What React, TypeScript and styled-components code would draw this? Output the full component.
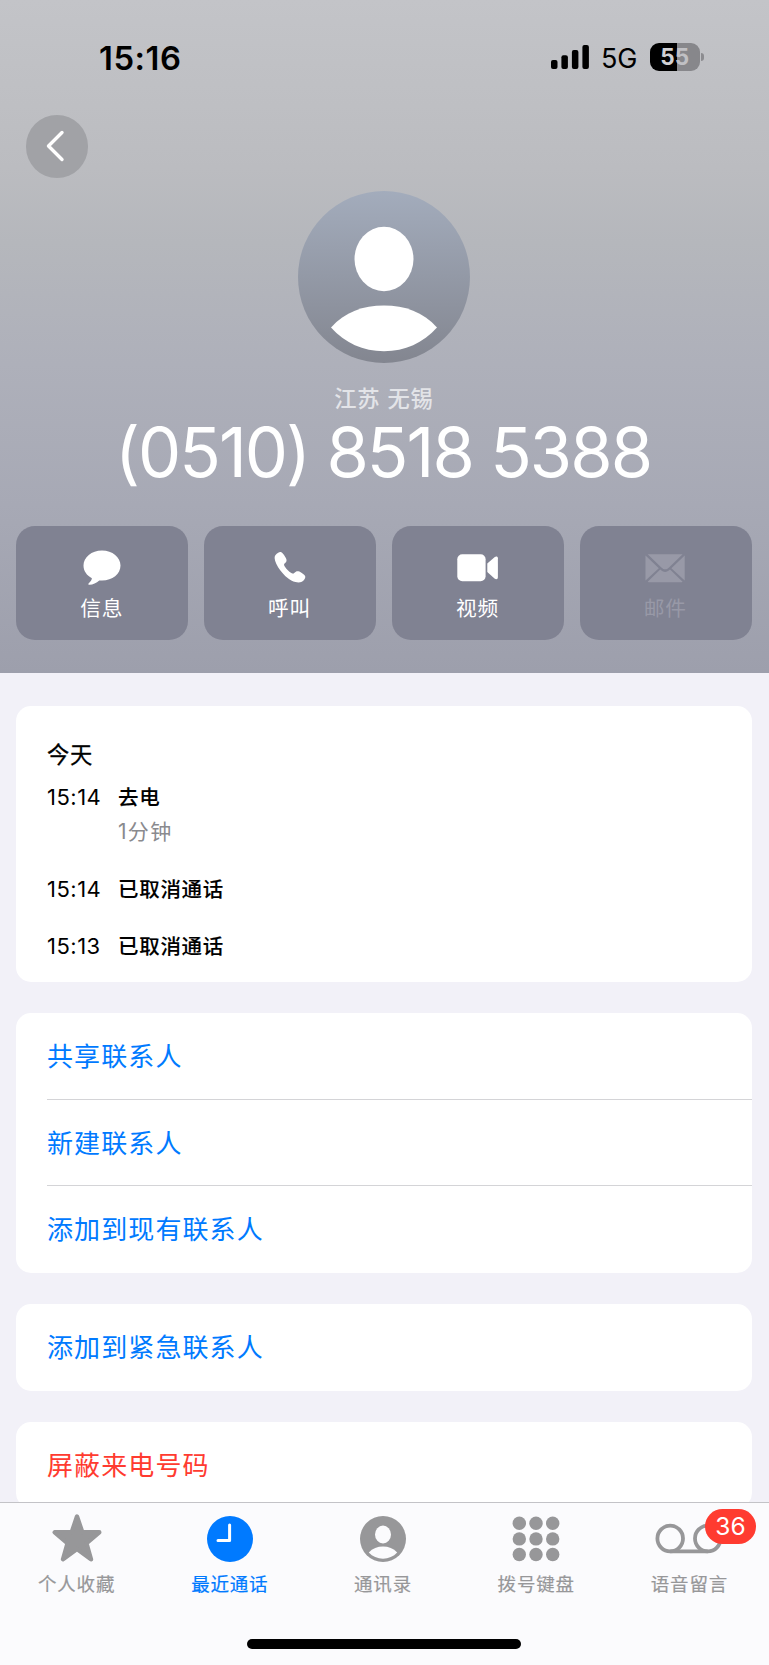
import React from 'react';
import styled, { createGlobalStyle } from 'styled-components';

const GlobalStyle = createGlobalStyle`
  * { box-sizing: border-box; }
  body {
    margin: 0;
    background: #f2f1f8;
    font-family: Inter, "Noto Sans CJK SC", sans-serif;
  }
  svg { display: block; overflow: visible; }
`;

const Screen = styled.div`
  width: 769px;
  height: 1665px;
  display: flex;
  flex-direction: column;
  overflow: hidden;
  background: #f2f1f8;
`;

const Header = styled.header`
  flex: none;
  height: 673px;
  padding-right: 1px;
  display: flex;
  flex-direction: column;
  background: linear-gradient(#c3c4c8 0%, #bbbcc0 25%, #b5b7bc 36%, #aeb0ba 54%, #a7a9b5 75%, #9d9fac 100%);
`;

const StatusBar = styled.div`
  height: 115px;
  padding: 0 64px 0 99px;
  display: flex;
  align-items: flex-start;
`;

const Clock = styled.div`
  margin-top: 38px;
  font-size: 32.8px;
  line-height: 40px;
  font-weight: 600;
  letter-spacing: 0.55px;
  color: #000;
`;

const Indicators = styled.div`
  margin-left: auto;
  margin-top: 43px;
  display: flex;
  align-items: flex-start;
`;

const Signal = styled.svg`
  margin-top: 2px;
`;

const Network = styled.span`
  width: 36px;
  margin: 0 13px 0 11.5px;
  font-size: 27px;
  line-height: 31px;
  letter-spacing: -0.2px;
  color: #000;
`;

const Battery = styled.div`
  width: 49.5px;
  height: 28px;
  border-radius: 9px;
  background: linear-gradient(90deg, #000 0 27.5px, #87878b 27.5px);
  display: flex;
  align-items: center;
  justify-content: center;
  font-size: 22.5px;
  line-height: 28px;
  font-weight: 700;
`;

const Digit = styled.span<{ $dim?: boolean }>`
  color: ${p => (p.$dim ? '#c0c0c4' : '#d0d0d3')};
`;

const BatteryTip = styled.div`
  width: 3px;
  height: 8px;
  margin: 10px 0 0 1.5px;
  border-radius: 0 3px 3px 0;
  background: #8c8c90;
`;

const BackButton = styled.button`
  width: 62.5px;
  height: 62.5px;
  margin-left: 25.5px;
  padding: 0;
  border: 0;
  border-radius: 50%;
  background: #a1a2a6;
  flex: none;
`;

const Profile = styled.div`
  margin-top: 13.5px;
  display: flex;
  flex-direction: column;
  align-items: center;
`;

const Location = styled.div`
  margin-top: 22px;
  height: 28px;
  font-size: 22.3px;
  line-height: 28px;
  letter-spacing: 0.9px;
  font-weight: 500;
  color: #e3e4e8;
`;

const PhoneNumber = styled.h1`
  margin: 0;
  padding-right: 2px;
  height: 80px;
  font-size: 68.5px;
  line-height: 80px;
  font-weight: 400;
  letter-spacing: -1.95px;
  white-space: nowrap;
  color: #fff;
`;

const Actions = styled.div`
  margin-top: 32.5px;
  padding: 0 16px;
  display: grid;
  grid-template-columns: repeat(4, 172.3px);
  justify-content: space-between;
`;

const Action = styled.div<{ $off?: boolean }>`
  height: 114px;
  border-radius: 19px;
  background: #808292;
  color: ${p => (p.$off ? '#9899a7' : '#fff')};
  display: flex;
  flex-direction: column;
  align-items: center;
  padding: 20px 1px 0 0;
`;

const ActionLabel = styled.span`
  margin-top: 5px;
  font-size: 20.7px;
  line-height: 32px;
  letter-spacing: 0.8px;
`;

const Content = styled.main`
  flex: 1;
  min-height: 0;
  overflow: hidden;
  padding: 33px 17px 0 16px;
  display: flex;
  flex-direction: column;
  gap: 31px;
`;

const Card = styled.section<{ $height: number }>`
  flex: none;
  height: ${p => p.$height}px;
  border-radius: 15px;
  background: #fff;
  overflow: hidden;
`;

const HistoryCard = styled(Card)`
  padding: 33px 31px 0;
`;

const Day = styled.div`
  font-size: 22.3px;
  line-height: 32px;
  letter-spacing: 0.6px;
  -webkit-text-stroke: 0.3px currentColor;
  color: #000;
`;

const CallRow = styled.div<{ $gap: number }>`
  margin-top: ${p => p.$gap}px;
  display: grid;
  grid-template-columns: 71px 1fr;
  font-size: 20.5px;
  line-height: 34px;
`;

const CallTime = styled.span`
  font-size: 22px;
  line-height: 32px;
  letter-spacing: 0.5px;
`;

const CallKind = styled.span`
  letter-spacing: 0.7px;
  font-weight: 500;
  -webkit-text-stroke: 0.1px currentColor;
`;

const Duration = styled.span`
  grid-column: 2;
  font-size: 21px;
  letter-spacing: 1.3px;
  color: #8a8a8e;
`;

const Row = styled.div<{ $danger?: boolean }>`
  height: 86px;
  margin-left: 31px;
  font-size: 26px;
  line-height: 88px;
  letter-spacing: 1.1px;
  color: ${p => (p.$danger ? '#ff3b30' : '#007aff')};
  & + & { border-top: 1px solid #d4d4d7; }
`;

const TabBar = styled.nav`
  flex: none;
  height: 163px;
  padding-right: 1px;
  border-top: 1px solid #c3c3c7;
  background: #fbfbfd;
  display: flex;
  flex-direction: column;
  align-items: center;
`;

const Tabs = styled.div`
  align-self: flex-start;
  width: 766px;
  height: 136px;
  display: grid;
  grid-template-columns: repeat(5, 1fr);
  padding-top: 10px;
`;

const Tab = styled.div<{ $active?: boolean }>`
  position: relative;
  display: flex;
  flex-direction: column;
  align-items: center;
  color: ${p => (p.$active ? '#007aff' : '#979799')};
`;

const TabLabel = styled.span`
  margin-top: 5px;
  font-size: 18.5px;
  line-height: 28px;
  letter-spacing: 0.8px;
  -webkit-text-stroke: 0.2px currentColor;
`;

const Badge = styled.span`
  position: absolute;
  top: -4px;
  right: 10px;
  width: 51px;
  height: 35px;
  border-radius: 18px;
  background: #ff3b30;
  color: #fff;
  font-size: 24.5px;
  line-height: 35px;
  text-align: center;
`;

const HomeIndicator = styled.div`
  width: 274px;
  height: 10px;
  border-radius: 5px;
  background: #000;
`;

const Avatar = () => (
  <svg width="172" height="172" viewBox="0 0 172 172">
    <defs>
      <linearGradient id="avatar" x1="0" y1="0" x2="0" y2="1">
        <stop offset="0" stopColor="#a3acbc" />
        <stop offset="1" stopColor="#838690" />
      </linearGradient>
    </defs>
    <circle cx="86" cy="86" r="86" fill="url(#avatar)" />
    <ellipse cx="86" cy="68" rx="29.5" ry="32.2" fill="#fff" />
    <path d="M33 136.5C47 121 65 114.5 86 114.5s39 6.500 53 22C125 152 107 160.200 86 160.200S47 152 33 136.500Z" fill="#fff" />
  </svg>
);

const MessageIcon = () => (
  <svg width="42" height="42" viewBox="0 0 42 42">
    <path d="M21 4.500C10.500 4.500 2.500 11.200 2.500 19.600c0 5.400 3.200 10 8.400 12.700-.3 2-1.500 3.600-3.100 4.900-.9.800-.5 1.700.8 1.600 3.400-.2 6.700-1.500 9.700-4.300.9.100 1.800.1 2.700.1 10.500 0 18.500-6.600 18.500-15S31.500 4.500 21 4.500Z" fill="currentColor" />
  </svg>
);

const PhoneIcon = () => (
  <svg width="42" height="42" viewBox="0 0 42 42">
    <path d="M9.200 6.800c1.700-1.200 3.500-.8 4.800.9 1.400 1.800 2.700 3.600 3.300 5.200.6 1.700.2 3-1.200 4.100-1.300 1-1.300 1.900-.5 3.200 2 3.200 4.300 5.300 7.200 7 1.100.6 1.900.4 2.700-.5 1.300-1.600 3-2 4.900-1.100 1.700.8 3.200 1.900 4.700 3.100 1.500 1.200 1.600 2.800.4 4.600-2 3-5.300 3.900-9 2.800C21 34.500 15.500 30 11.200 24.200 8 19.800 5.800 15.700 5.600 12c0-2.300 1.400-3.900 3.600-5.200Z" fill="currentColor" />
  </svg>
);

const VideoIcon = () => (
  <svg width="42" height="42" viewBox="0 0 42 42">
    <rect x="1.300" y="8.300" width="28.300" height="27" rx="5" fill="currentColor" />
    <path d="M31.300 17.600 38.500 11.200c1.700-1.400 3.400-.8 3.400 1.100v19c0 1.900-1.700 2.500-3.400 1.100l-7.200-6.400Z" fill="currentColor" />
  </svg>
);

const MailIcon = () => (
  <svg width="42" height="42" viewBox="0 0 42 42">
    <path d="M3.700 8.200h34.900L25 21.400c-2.600 2.500-5 2.500-7.600 0ZM1.500 9.600 14.800 22.300 1.500 34.400ZM40.700 9.600 27.400 22.300l13.300 12.100ZM16.200 23.600c3.200 3.100 6.600 3.100 9.800 0l12.600 12.200c-.6.400-1.300.5-2.300.5H6c-1 0-1.700-.1-2.300-.5Z" fill="currentColor" />
  </svg>
);

const StarIcon = () => (
  <svg width="52" height="52" viewBox="0 0 52 52">
    <path d="M26 3.500 31.300 19.300H48.300L35.400 30.200 40 46.300 26 36 12 46.300 16.600 30.200 3.700 19.300H20.700Z" fill="currentColor" stroke="currentColor" strokeWidth="4.400" strokeLinejoin="round" />
  </svg>
);

const RecentsIcon = () => (
  <svg width="52" height="52" viewBox="0 0 52 52">
    <circle cx="26" cy="26" r="23" fill="currentColor" />
    <path d="M25.600 12v15.400H14" fill="none" stroke="#fff" strokeWidth="3" strokeLinecap="round" strokeLinejoin="round" />
  </svg>
);

const ContactIcon = () => (
  <svg width="52" height="52" viewBox="0 0 52 52">
    <circle cx="26" cy="26" r="23" fill="currentColor" />
    <ellipse cx="26" cy="21.500" rx="8" ry="9" fill="#fbfbfd" />
    <path d="M11.800 39.500C15.500 35.500 20.500 33.600 26 33.600s10.500 1.900 14.200 5.900C36.500 43.500 31.500 45.700 26 45.700s-10.500-2.200-14.200-6.200Z" fill="#fbfbfd" />
  </svg>
);

const KeypadIcon = () => (
  <svg width="52" height="52" viewBox="0 0 52 52" fill="currentColor">
    {[10.3, 25.9, 41.5].map(y =>
      [9.3, 26, 42.7].map(x => <circle key={`${x}-${y}`} cx={x} cy={y} r="6.700" />),
    )}
  </svg>
);

const VoicemailIcon = () => (
  <svg width="66" height="52" viewBox="0 0 66 52" fill="none" stroke="currentColor" strokeWidth="3.800">
    <circle cx="14.200" cy="25.500" r="12.800" />
    <circle cx="51.800" cy="25.500" r="12.800" />
    <path d="M14.200 38.300h37.600" />
  </svg>
);

const tabs = [
  { label: '个人收藏', Icon: StarIcon },
  { label: '最近通话', Icon: RecentsIcon, active: true },
  { label: '通讯录', Icon: ContactIcon },
  { label: '拨号键盘', Icon: KeypadIcon },
  { label: '语音留言', Icon: VoicemailIcon, badge: 36 },
];

const actions = [
  { label: '信息', Icon: MessageIcon },
  { label: '呼叫', Icon: PhoneIcon },
  { label: '视频', Icon: VideoIcon },
  { label: '邮件', Icon: MailIcon, off: true },
];

export default function App() {
  return (
    <>
      <GlobalStyle />
      <Screen>
        <Header>
          <StatusBar>
            <Clock>15:16</Clock>
            <Indicators>
              <Signal width="39" height="24" viewBox="0 0 39 24">
                <rect x="0" y="15" width="6.500" height="9" rx="2" />
                <rect x="10.400" y="10.300" width="6.500" height="13.700" rx="2" />
                <rect x="20.900" y="5" width="6.500" height="19" rx="2" />
                <rect x="31.400" y="0" width="6.500" height="24" rx="2" />
              </Signal>
              <Network>5G</Network>
              <Battery>
                <Digit>5</Digit>
                <Digit $dim>5</Digit>
              </Battery>
              <BatteryTip />
            </Indicators>
          </StatusBar>
          <BackButton aria-label="返回">
            <svg width="62.500" height="62.500" viewBox="0 0 62.500 62.500">
              <path d="M36 17.500 22.500 31 36 44.500" fill="none" stroke="#fff" strokeWidth="3.400" strokeLinecap="round" strokeLinejoin="round" />
            </svg>
          </BackButton>
          <Profile>
            <Avatar />
            <Location>江苏 无锡</Location>
            <PhoneNumber>(0510) 8518 5388</PhoneNumber>
          </Profile>
          <Actions>
            {actions.map(({ label, Icon, off }) => (
              <Action key={label} $off={off}>
                <Icon />
                <ActionLabel>{label}</ActionLabel>
              </Action>
            ))}
          </Actions>
        </Header>
        <Content>
          <HistoryCard $height={276}>
            <Day>今天</Day>
            <CallRow $gap={10}>
              <CallTime>15:14</CallTime>
              <CallKind>去电</CallKind>
              <Duration>1分钟</Duration>
            </CallRow>
            <CallRow $gap={24}>
              <CallTime>15:14</CallTime>
              <CallKind>已取消通话</CallKind>
            </CallRow>
            <CallRow $gap={23}>
              <CallTime>15:13</CallTime>
              <CallKind>已取消通话</CallKind>
            </CallRow>
          </HistoryCard>
          <Card $height={260}>
            <Row>共享联系人</Row>
            <Row>新建联系人</Row>
            <Row>添加到现有联系人</Row>
          </Card>
          <Card $height={86.5}>
            <Row>添加到紧急联系人</Row>
          </Card>
          <Card $height={86.5}>
            <Row $danger>屏蔽来电号码</Row>
          </Card>
        </Content>
        <TabBar>
          <Tabs>
            {tabs.map(({ label, Icon, active, badge }) => (
              <Tab key={label} $active={active}>
                <Icon />
                {badge && <Badge>{badge}</Badge>}
                <TabLabel>{label}</TabLabel>
              </Tab>
            ))}
          </Tabs>
          <HomeIndicator />
        </TabBar>
      </Screen>
    </>
  );
}
